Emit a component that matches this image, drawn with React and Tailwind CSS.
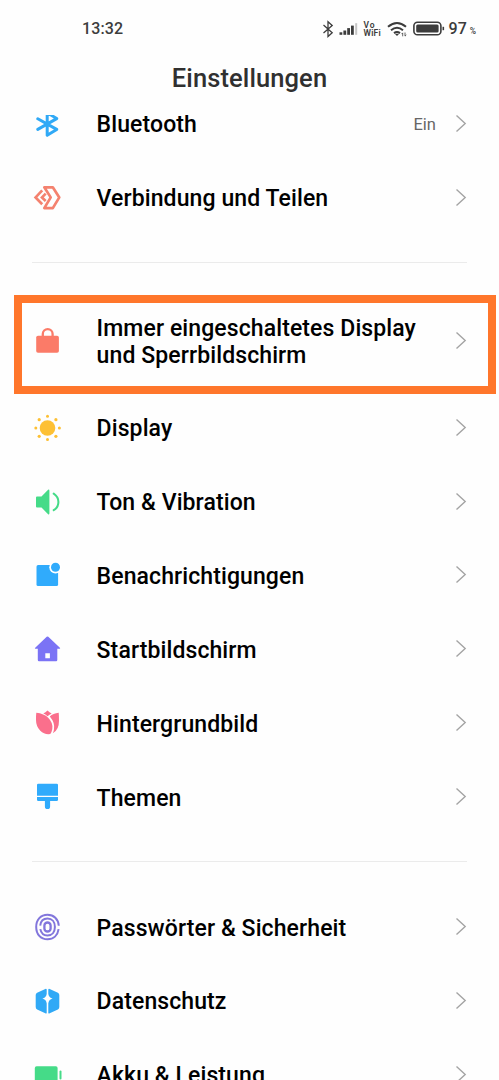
import React from 'react';

function Icon({ children }) {
  return (
    <svg viewBox="-20.5 -20 40 40" className="h-10 w-10 shrink-0" fill="none" strokeLinecap="round" strokeLinejoin="round">
      {children}
    </svg>
  );
}

const icons = {
  bluetooth: (
    <Icon>
      <path d="M-9.7 -5.2L9.2 5.4L-0.3 11.3V-11.3L9.2 -5.4L-9.7 5.4" stroke="#30a9f6" strokeWidth="3" />
    </Icon>
  ),
  share: (
    <Icon>
      <g stroke="#f4826f" strokeWidth="2.7" strokeLinecap="butt" strokeLinejoin="miter">
        <path d="M-3.2 -10.7H5.3L11.8 -0.6L5.3 10.1H-3.2L3.2 -0.6Z" strokeLinejoin="round" />
        <path d="M-5.3 -7.7L-11.9 -0.6L-5.3 6.2" />
        <path d="M-1.8 -4.4L-5.5 -0.6L-1.8 2.9" />
      </g>
    </Icon>
  ),
  lock: (
    <Icon>
      <path d="M-4.7 -3.5V-6.9A4.9 4.9 0 0 1 5.1 -6.9V-3.5" stroke="#fb7b68" strokeWidth="2.3" />
      <rect x="-11.3" y="-5.2" width="22.7" height="17" rx="1.8" fill="#fb7b68" />
    </Icon>
  ),
  sun: (
    <Icon>
      <g fill="#fdc034">
        <circle r="7.8" />
        <circle cy="-11.8" r="1.5" />
        <circle cy="11.6" r="1.5" />
        <circle cx="-11.7" r="1.5" />
        <circle cx="11.9" r="1.5" />
        <circle cx="-8.3" cy="-8.3" r="1.6" />
        <circle cx="8.4" cy="-8.3" r="1.6" />
        <circle cx="-8.3" cy="8.3" r="1.6" />
        <circle cx="8.4" cy="8.3" r="1.6" />
      </g>
    </Icon>
  ),
  sound: (
    <Icon>
      <path d="M-10.5 -5.5H-6L0.6 -12.2Q1.9 -13 1.9 -11.3V11.3Q1.9 13 0.6 12.2L-6 5.5H-10.5Q-11.5 5.5 -11.5 4.5V-4.5Q-11.5 -5.5 -10.5 -5.5Z" fill="#45db88" />
      <path d="M6.2 -8.4Q10.9 -5.2 10.9 -0.1Q10.9 5.3 6.2 8.2" stroke="#45db88" strokeWidth="2" />
    </Icon>
  ),
  notification: (
    <Icon>
      <rect x="-11" y="-9.9" width="21.6" height="21" rx="1.6" fill="#30abfc" />
      <circle cx="8" cy="-7.7" r="6.2" fill="#fff" />
      <circle cx="8" cy="-7.7" r="4.5" fill="#30abfc" />
    </Icon>
  ),
  home: (
    <Icon>
      <path fillRule="evenodd" d="M-0.8 -12.2Q0 -12.8 0.8 -12.2L12.4 -1.2Q13.2 -0.2 12 -0.2H9.8V11Q9.8 12.2 8.6 12.2H-8.5Q-9.7 12.2 -9.7 11V-0.2H-12Q-13.2 -0.2 -12.3 -1.2ZM-2.2 4.3V9.3H2.4V4.3Z" fill="#7b73f5" />
    </Icon>
  ),
  tulip: (
    <Icon>
      <g fill="#fa6f8c">
        <path d="M-4.2 -9.6Q-2 -10.2 0 -12.4Q2 -10.2 4.2 -9.6Q2 -8.6 0 -6.8Q-2 -8.8 -4.2 -9.6Z" />
        <path d="M-11.2 -10.2Q-3.5 -9.4 0.7 -5.2Q5.8 0 4.8 6Q4.3 9 2.8 11.1Q-3 12 -7.2 7.8Q-11.5 3.4 -11.5 -3Q-11.6 -7 -11.2 -10.2Z" />
        <path d="M11.2 -10.2Q5.6 -9.7 2.3 -6.4Q7.9 0 6.4 7Q6 8.8 5.3 10.3Q11.6 6.8 11.5 -2.3Q11.5 -7 11.2 -10.2Z" />
      </g>
    </Icon>
  ),
  brush: (
    <Icon>
      <g fill="#30abfc">
        <path d="M-9.2 -13.2H9.2Q10.5 -13.2 10.5 -12V-1.2H-10.5V-12Q-10.5 -13.2 -9.2 -13.2Z" />
        <path d="M-10.5 0H10.5V2.8Q10.5 4 9.2 4H2.6V9.4A2.6 2.6 0 0 1 -2.6 9.4V4H-9.2Q-10.5 4 -10.5 2.8Z" />
      </g>
    </Icon>
  ),
  fingerprint: (
    <Icon>
      <g stroke="#8276dc" strokeWidth="2" strokeLinecap="butt">
        <path d="M11.3 -1.2C10.8 -8 6.3 -12.3 0 -12.3C-6.8 -12.3 -11.3 -7.3 -11.3 0C-11.3 7.3 -6.8 12.3 0 12.3C6 12.3 10.2 8.5 11.1 2.2" />
        <path d="M-7.3 -1.3C-6.8 -5.7 -4.2 -8.4 0 -8.4C4.6 -8.4 7.4 -5 7.4 0C7.4 5 4.6 8.4 0 8.4C-3.8 8.4 -6.4 6 -7.2 2.1" />
        <rect x="-3.1" y="-4.5" width="6.2" height="9" rx="3.1" strokeWidth="2.3" />
      </g>
    </Icon>
  ),
  privacy: (
    <Icon>
      <g fill="#30a9f6">
        <path d="M-0.8 -11.6V-7Q-1.5 -3.2 -5.1 -2.4Q-1.5 -1.5 -0.8 2.2V12Q-1.2 12.9 -2.2 12.3L-10.4 8.4Q-11.8 7.6 -11.8 6V-6Q-11.8 -7.5 -10.4 -8.2L-2.2 -12.1Q-1 -12.5 -0.8 -11.6Z" />
        <path d="M0.8 -11.6V-7Q1.5 -3.2 5.1 -2.4Q1.5 -1.5 0.8 2.2V12Q1.2 12.9 2.2 12.3L10.4 8.4Q11.8 7.6 11.8 6V-6Q11.8 -7.5 10.4 -8.2L2.2 -12.1Q1 -12.5 0.8 -11.6Z" />
      </g>
    </Icon>
  ),
  battery: (
    <Icon>
      <rect x="-12.7" y="-8.8" width="22.8" height="20" rx="1.8" fill="#45db88" />
      <path d="M13 -3.6V3.6" stroke="#45db88" strokeWidth="2" />
    </Icon>
  ),
};

function Chevron() {
  return (
    <svg viewBox="0 0 12 20" className="h-5 w-3 shrink-0" fill="none">
      <path d="M1.5 1.5L10.2 9.5L1.5 17.5" stroke="#a4a4a4" strokeWidth="1.4" />
    </svg>
  );
}

function Row({ icon, label, value, highlighted }) {
  return (
    <div className={`relative flex shrink-0 items-center pr-8 pl-[27px] ${highlighted ? 'h-[100px]' : 'h-[73.85px]'}`}>
      {icons[icon]}
      <span className="ml-[29.6px] flex-1 pt-[2px] text-[23px] leading-[27px] font-medium tracking-[0.1px] whitespace-pre-line text-black">{label}</span>
      {value && <span className="mr-[19px] pt-[2px] text-[16.5px] text-[#666]">{value}</span>}
      <Chevron />
      {highlighted && <div className="absolute top-[4px] right-[3px] left-[14px] h-[99px] border-8 border-[#ff762b]" />}
    </div>
  );
}

function Divider() {
  return (
    <div className="h-[56.2px] shrink-0 px-8 pt-[27.2px]">
      <div className="h-px w-full bg-[#ebebeb]" />
    </div>
  );
}

function StatusBar() {
  return (
    <div className="flex h-[58px] items-center pr-[23px] pl-[82px] text-[#3c3c3c]">
      <span className="flex-1 text-[16px] font-medium tracking-[0.1px]">13:32</span>
      <svg viewBox="0 0 12 18" className="h-[18px] w-3" fill="none" stroke="currentColor" strokeWidth="1.3">
        <path d="M1.5 5L10.2 12.7L6 16.5V1.7L10.2 5.4L1.5 13" />
      </svg>
      <svg viewBox="0 0 20 16" className="ml-[5px] h-4 w-5" fill="currentColor">
        <rect x="0.5" y="11.3" width="2.8" height="2.5" />
        <rect x="4.4" y="9.5" width="2.8" height="4.3" />
        <rect x="8.2" y="7.1" width="2.8" height="6.7" />
        <rect x="12" y="4.6" width="2.8" height="9.2" />
        <rect x="16.2" y="2.2" width="2" height="11.6" fill="#c5c5c5" />
      </svg>
      <div className="ml-[5px] w-[18px] text-[8.5px] leading-[8px] font-semibold">
        <div className="tracking-[0.8px]">Vo</div>
        <div className="tracking-[0.2px]">WiFi</div>
      </div>
      <svg viewBox="0 0 21 18" className="ml-[5px] h-[18px] w-[21px]" fill="none" stroke="currentColor" strokeWidth="2">
        <path d="M1 6.8Q10 -0.8 19 6.8M4 10.2Q10 5.3 16 10.2M7 13.1Q10 11 13 13.1" />
        <path d="M7.8 13.8L10 16.1L12.2 13.8Z" fill="currentColor" stroke="none" />
        <path d="M15.7 16.3V12.9L14.5 14.1M18 12.5V16.1L19.3 14.9" strokeWidth="0.8" />
      </svg>
      <svg viewBox="0 0 32 16" className="ml-[5px] h-4 w-8" fill="none">
        <rect x="0.9" y="1.2" width="27" height="12.6" rx="3.6" stroke="currentColor" strokeWidth="1.6" />
        <rect x="3.2" y="3.5" width="22.4" height="8" rx="1.5" fill="currentColor" />
        <path d="M30.3 5.8V9.2" stroke="currentColor" strokeWidth="1.6" />
      </svg>
      <span className="ml-[4px] text-[16px] font-medium">97</span>
      <span className="mt-[4px] ml-[3px] text-[8.5px] font-medium">%</span>
    </div>
  );
}

export default function App() {
  return (
    <div className="flex h-[1080px] w-[499px] flex-col overflow-hidden bg-[#fefefe] font-['Roboto',sans-serif]">
      <header className="h-[115px] shrink-0">
        <StatusBar />
        <h1 className="text-center text-[25.5px] leading-[40px] font-[460] tracking-[0.1px] text-[#303030]">Einstellungen</h1>
      </header>
      <main className="flex min-h-0 flex-1 flex-col justify-start overflow-hidden">
        <div className="-mt-[28px] flex shrink-0 flex-col">
          <Row icon="bluetooth" label="Bluetooth" value="Ein" />
          <Row icon="share" label="Verbindung und Teilen" />
          <Divider />
          <Row icon="lock" label={'Immer eingeschaltetes Display\nund Sperrbildschirm'} highlighted />
          <Row icon="sun" label="Display" />
          <Row icon="sound" label="Ton & Vibration" />
          <Row icon="notification" label="Benachrichtigungen" />
          <Row icon="home" label="Startbildschirm" />
          <Row icon="tulip" label="Hintergrundbild" />
          <Row icon="brush" label="Themen" />
          <Divider />
          <Row icon="fingerprint" label="Passwörter & Sicherheit" />
          <Row icon="privacy" label="Datenschutz" />
          <Row icon="battery" label="Akku & Leistung" />
        </div>
      </main>
    </div>
  );
}
